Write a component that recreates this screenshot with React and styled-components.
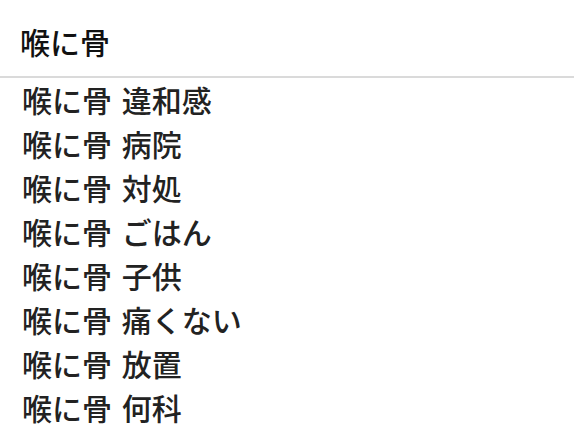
import React from 'react';
import styled, { createGlobalStyle } from 'styled-components';

const GlobalStyle = createGlobalStyle`
    html, body {
        margin: 0;
        padding: 0;
        background: #fff;
    }
    body {
        font-family: "Noto Sans CJK JP", "Noto Sans", sans-serif;
    }
`;

const Panel = styled.div`
    width: 100%;
    background: #fff;
    box-shadow: 0 4px 7px rgba(0, 0, 0, 0.28);
`;

const SearchBar = styled.div`
    box-sizing: border-box;
    height: 78px;
    padding: 19px 20px 0;
    border-bottom: 2px solid #dadada;
    font-size: 30px;
    font-weight: 500;
    line-height: 44px;
    color: #111;
`;

const List = styled.ul`
    list-style: none;
    margin: 0;
    padding: 0;
`;

const Item = styled.li`
    height: 44px;
    padding-left: 22px;
    font-size: 30px;
    font-weight: 500;
    line-height: 43px;
    word-spacing: 3px;
    color: #222;
    white-space: nowrap;
    cursor: pointer;
`;

const sugerencias = ['違和感', '病院', '対処', 'ごはん', '子供', '痛くない', '放置', '何科'];

const App = () => {
    const query = '喉に骨';

    return (
        <>
            <GlobalStyle />
            <Panel>
                <SearchBar>{query}</SearchBar>
                <List>
                    {sugerencias.map((s) => (
                        <Item key={s}>{query} {s}</Item>
                    ))}
                </List>
            </Panel>
        </>
    );
};

export default App;
